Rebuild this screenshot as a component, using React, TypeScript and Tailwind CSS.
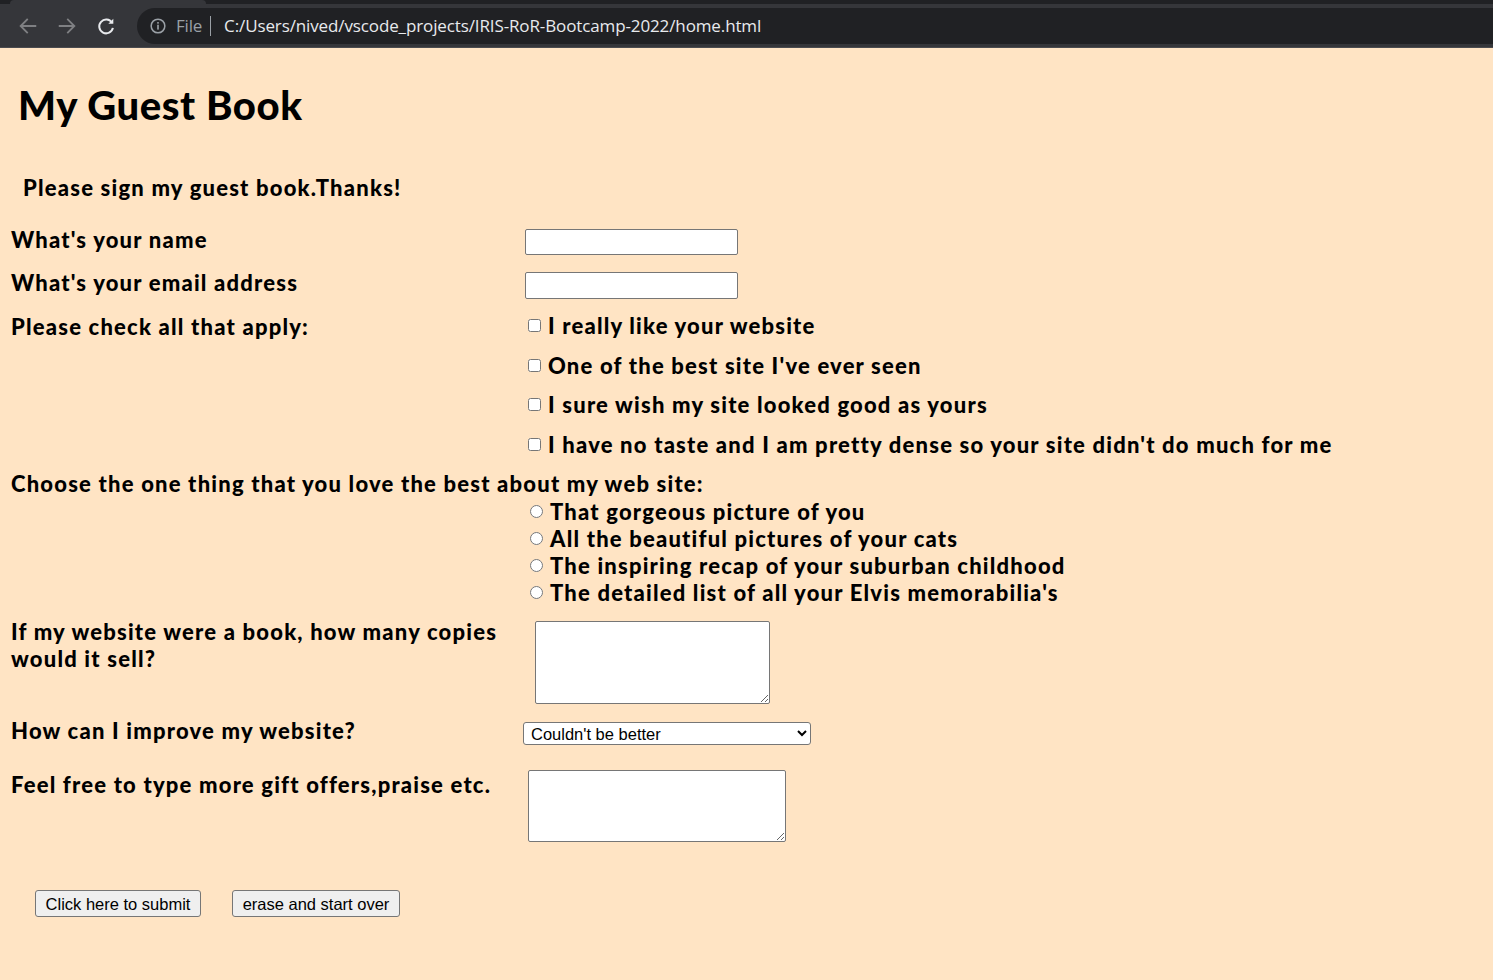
import React from "react";

const body = { fontFamily: "Lato, 'Noto Sans', sans-serif" } as const;
const ctl = { fontFamily: "'Liberation Sans', Arial, sans-serif" } as const;

function Chrome() {
  return (
    <div className="relative h-[48px] w-full bg-[#35363a]">
      <div className="flex h-[4px] w-full bg-[#202124]">
        <div className="ml-[10px] h-[4px] w-[196px] rounded-t-[6px] bg-[#35363a]" />
      </div>
      <div className="flex h-[44px] items-start">
        <div className="flex h-[36px] w-[137px] items-center pl-[17px] gap-[17px] mt-[4px]">
          <svg width="22" height="22" viewBox="0 0 24 24" fill="none" stroke="#7f8083" strokeWidth="2" strokeLinecap="square">
            <path d="M20 12H5M11 5l-7 7 7 7" />
          </svg>
          <svg width="22" height="22" viewBox="0 0 24 24" fill="none" stroke="#7f8083" strokeWidth="2" strokeLinecap="square">
            <path d="M4 12h15M13 5l7 7-7 7" />
          </svg>
          <svg width="22" height="22" viewBox="0 0 24 24" fill="none" stroke="#e8eaed" strokeWidth="2.2">
            <path d="M18.5 8.5A7.5 7.5 0 1 0 19.5 14" />
            <path d="M20 4v5.5h-5.5z" fill="#e8eaed" stroke="none" />
          </svg>
        </div>
        <div className="mt-[4px] flex h-[36px] flex-1 items-center rounded-l-full bg-[#202124] pl-[12px]">
          <svg width="18" height="18" viewBox="0 0 20 20" fill="none">
            <circle cx="10" cy="10" r="7.6" stroke="#9aa0a6" strokeWidth="1.7" />
            <rect x="9.1" y="8.6" width="1.8" height="5.4" fill="#9aa0a6" />
            <rect x="9.1" y="5.6" width="1.8" height="1.8" fill="#9aa0a6" />
          </svg>
          <span className="ml-[9px] text-[17px] tracking-[-0.2px] text-[#9aa0a6]" style={{ fontFamily: "'Open Sans', 'Noto Sans', sans-serif" }}>
            File
          </span>
          <span className="ml-[8px] h-[20px] w-[1px] bg-[#9aa0a6]" />
          <span className="ml-[13px] text-[17px] tracking-[-0.12px] text-[#e8eaed]" style={{ fontFamily: "'Open Sans', 'Noto Sans', sans-serif" }}>
            C:/Users/nived/vscode_projects/IRIS-RoR-Bootcamp-2022/home.html
          </span>
        </div>
      </div>
      <div className="absolute bottom-0 left-0 h-[1px] w-full bg-[#4a4b4f]" />
    </div>
  );
}

const Check = ({ label }: { label: string }) => (
  <div className="flex h-[39.6px] items-center">
    <input type="checkbox" className="m-0 ml-[4px] h-[13px] w-[13px]" />
    <span className="ml-[7px]">{label}</span>
  </div>
);

const Radio = ({ label }: { label: string }) => (
  <div className="flex h-[27px] items-center">
    <input type="radio" name="best" className="m-0 ml-[6px] h-[13px] w-[13px]" />
    <span className="ml-[7px]">{label}</span>
  </div>
);

export default function App() {
  return (
    <div className="min-h-[980px] w-full bg-[#ffe4c4] text-black">
      <Chrome />
      <div className="font-black text-[22px] tracking-[1.2px]" style={body}>
        <div className="ml-[18px] mt-[32px] h-[50px] text-[40px] leading-[50px] tracking-[0.6px]">My Guest Book</div>
        <div className="ml-[23px] mt-[43px] h-[30px] leading-[30px]">Please sign my guest book.Thanks!</div>

        <div className="mt-[23px] flex h-[30px] items-start">
          <div className="w-[525px] pl-[11px] leading-[27px]">What's your name</div>
          <input type="text" className="mt-[3px] h-[26px] w-[213px] rounded-[2px] border border-[#767676] bg-white" />
        </div>
        <div className="mt-[13px] flex h-[30px] items-start">
          <div className="w-[525px] pl-[11px] leading-[27px]">What's your email address</div>
          <input type="text" className="mt-[3px] h-[27px] w-[213px] rounded-[2px] border border-[#767676] bg-white" />
        </div>

        <div className="mt-[7px] flex">
          <div className="flex h-[40px] w-[524px] items-center pl-[11px]">Please check all that apply:</div>
          <div className="flex flex-col">
            <Check label="I really like your website" />
            <Check label="One of the best site I've ever seen" />
            <Check label="I sure wish my site looked good as yours" />
            <Check label="I have no taste and I am pretty dense so your site didn't do much for me" />
          </div>
        </div>

        <div className="mt-[6px] h-[28px] pl-[11px] leading-[28px]">
          Choose the one thing that you love the best about my web site:
        </div>
        <div className="ml-[524px] flex flex-col">
          <Radio label="That gorgeous picture of you" />
          <Radio label="All the beautiful pictures of your cats" />
          <Radio label="The inspiring recap of your suburban childhood" />
          <Radio label="The detailed list of all your Elvis memorabilia's" />
        </div>

        <div className="mt-[12px] flex">
          <div className="w-[535px] pl-[11px] leading-[27px]">
            If my website were a book, how many copies
            <br />
            would it sell?
          </div>
          <textarea className="mt-[3px] h-[83px] w-[235px] rounded-[2px] border border-[#767676] bg-white" />
        </div>

        <div className="mt-[12px] flex h-[30px]">
          <div className="w-[523px] pl-[11px] leading-[30px]">How can I improve my website?</div>
          <select
            className="mt-[6px] h-[23px] w-[288px] rounded-[3px] border border-[#767676] bg-white pl-[3px] text-[16.5px] font-normal tracking-normal"
            style={ctl}
            defaultValue="a"
          >
            <option value="a">Couldn't be better</option>
            <option value="b">More pictures</option>
          </select>
        </div>

        <div className="mt-[24px] flex">
          <div className="w-[528px] pl-[11px] leading-[30px]">Feel free to type more gift offers,praise etc.</div>
          <textarea className="h-[72px] w-[258px] rounded-[2px] border border-[#767676] bg-white" />
        </div>

        <div className="mt-[48px] flex gap-[31px] pl-[35px] text-[16.5px] font-normal tracking-normal" style={ctl}>
          <button className="h-[27px] w-[166px] rounded-[3px] border border-[#767676] bg-[#efefef] text-black">
            Click here to submit
          </button>
          <button className="h-[27px] w-[168px] rounded-[3px] border border-[#767676] bg-[#efefef] text-black">
            erase and start over
          </button>
        </div>
      </div>
    </div>
  );
}
